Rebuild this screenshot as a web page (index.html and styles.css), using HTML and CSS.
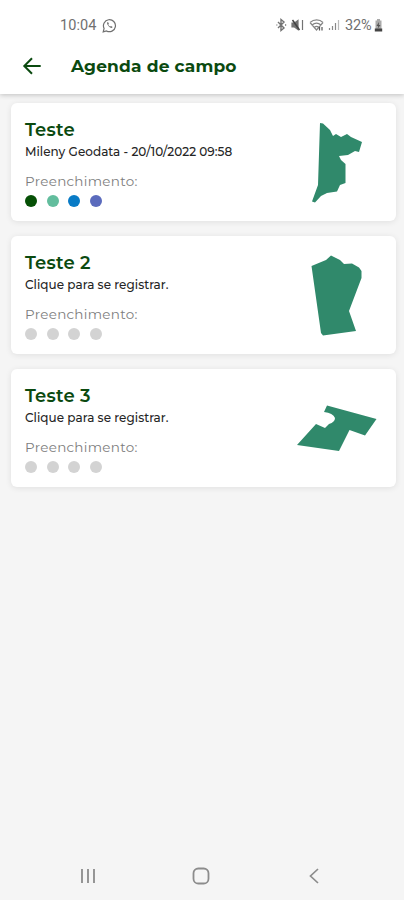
FILE: index.html
```html
<!DOCTYPE html>
<html lang="pt-BR">
<head>
<meta charset="utf-8">
<meta name="viewport" content="width=device-width, initial-scale=1">
<title>Agenda de campo</title>
<link rel="stylesheet" href="styles.css">
</head>
<body>
<div class="screen">
  <header class="top">
    <div class="status">
      <span class="clock">10:04</span>
      <svg class="whatsapp" width="15" height="15" viewBox="0 0 15 15" fill="none" stroke="#707070" stroke-width="1.2"><path d="M1.2 13.8l.9-3.4a6 6 0 1 1 2.400 2.500z"/><path d="M5.200 4.300c-.8 1.500 1.900 5.400 4.500 5.800l1-1.200-1.700-1-.9.700c-.8-.4-1.500-1.200-1.800-2l.6-.8-.7-1.500z" fill="#707070" stroke="none"/></svg>
      <svg class="signals" width="66" height="16" viewBox="0 0 66 16" fill="none" stroke="#737373" stroke-width="1.200">
        <path d="M3 5l6 6-3 2.500v-11L9 5l-6 6M1.500 8h.8M10 8h1.200" stroke-width="1.400"/>
        <path d="M17 6h2.500L23 3.500v9L19.500 10H17z" fill="#737373"/><path d="M17.500 3l7 10" stroke="#444" stroke-width="1.500"/><path d="M27.500 3v10"/>
        <path d="M35 5.500c4-3.500 9.500-3.500 13 0M37 8c3-2.500 6-2.500 9 0M39.500 10.200c1.500-1.200 2.800-1.200 4 0M35 5.500l6.500 7.500L48 5.500" stroke="#858585"/><path d="M44.500 10v3.500M47 13.500V10" stroke="#555"/>
        <path d="M54.500 13v-2M57.500 13V9M60.500 13V6" stroke="#888"/><path d="M63.500 13V3" stroke="#bbb"/>
      </svg>
      <span class="percent">32%</span>
      <svg class="battery" width="9" height="13" viewBox="0 0 9 13"><path d="M3 0h3v1.500h1.500V12h-6V1.500H3z" fill="#aaa"/><path d="M5 3L2.500 7h1.700L3.800 9.500 6.500 6H4.800z" fill="#555"/><path d="M.8 9.500h7.400v3H.8z" fill="#444"/></svg>
    </div>
    <div class="bar">
      <svg class="back" width="20" height="18" viewBox="0 0 20 18" fill="none" stroke="#0b4a10" stroke-width="2"><path d="M18.700 9H2.500M10 1.300L2.300 9l7.700 7.700"/></svg>
      <h1>Agenda de campo</h1>
    </div>
  </header>
  <main class="list">
    <article class="card">
      <div class="info">
        <h2>Teste</h2>
        <p class="detail">Mileny Geodata - 20/10/2022 09:58</p>
        <p class="label">Preenchimento:</p>
        <div class="dots"><i class="forest"></i><i class="mint"></i><i class="blue"></i><i class="indigo"></i></div>
      </div>
      <svg class="plot" width="106" height="118" viewBox="0 0 106 118"><path d="M30 20L33 20.500 40 27 43 33 46 31 51 34 57 31 61 34 72 39 69 49 65 48 58 52 49 53 51 57 55.500 61V80L50 82 47 88.500 37 90 31 93 25 99.500 22 98.500 28 82z"/></svg>
    </article>
    <article class="card">
      <div class="info">
        <h2>Teste 2</h2>
        <p class="detail">Clique para se registrar.</p>
        <p class="label">Preenchimento:</p>
        <div class="dots"><i></i><i></i><i></i><i></i></div>
      </div>
      <svg class="plot" width="106" height="118" viewBox="0 -1 106 118"><path d="M21.500 29L36 23 41 18.500 50 23 54 27 62 26.500 69 30.500 71.500 34V41L59 74 66 94 33 98.500 31 96z"/></svg>
    </article>
    <article class="card">
      <div class="info">
        <h2>Teste 3</h2>
        <p class="detail">Clique para se registrar.</p>
        <p class="label">Preenchimento:</p>
        <div class="dots"><i></i><i></i><i></i><i></i></div>
      </div>
      <svg class="plot" width="106" height="118" viewBox="0 -1 106 118"><path d="M37 35.500L86.500 49 75 65.500 59.500 60 49 81 7 75 26 54 35 58 39 54Q45 52 45 48 43 43 34 42z"/></svg>
    </article>
  </main>
  <nav class="system">
    <svg width="16" height="16" viewBox="0 0 16 16" stroke="#8c8c8c" stroke-width="1.800"><path d="M2 1v14M8 1v14M14 1v14"/></svg>
    <svg width="18" height="18" viewBox="0 0 18 18" fill="none" stroke="#8c8c8c" stroke-width="1.800"><rect x="1.500" y="1.500" width="15" height="15" rx="4.800"/></svg>
    <svg width="10" height="16" viewBox="0 0 10 16" fill="none" stroke="#8c8c8c" stroke-width="1.700"><path d="M9 1L1.500 8 9 15"/></svg>
  </nav>
</div>
</body>
</html>
```
FILE: styles.css
```css
* { box-sizing: border-box; }
body { margin: 0; background: #f5f5f5; font-family: Montserrat, Inter, sans-serif; }
h1, h2, p { margin: 0; white-space: nowrap; }
svg { display: block; flex: none; }
.screen { width: 404px; height: 900px; display: flex; flex-direction: column; }
.top { height: 94px; background: #fff; box-shadow: 0 1px 5px rgba(0, 0, 0, .22); }
.status { height: 46px; padding: 4px 20px 0 60px; display: flex; align-items: center; font-family: Roboto, sans-serif; font-size: 14.500px; color: #707070; }
.clock { width: 37px; letter-spacing: .1px; }
.whatsapp { margin-left: 5px; }
.signals { margin-left: 158px; }
.percent { margin-left: 4px; width: 28px; letter-spacing: -.2px; }
.battery { margin-left: 1px; }
.bar { height: 40px; padding-left: 22px; display: flex; align-items: center; }
h1 { margin-left: 29px; font-size: 17px; line-height: 22px; font-weight: 700; letter-spacing: .18px; color: #0b4a10; }
.list { flex: 1; padding: 9px 8px 0 11px; display: flex; flex-direction: column; gap: 15px; }
.card { height: 118px; padding-left: 14px; display: flex; justify-content: space-between; background: #fff; border-radius: 6px; box-shadow: 0 1px 6px rgba(0, 0, 0, .09); }
.info { padding-top: 16px; }
h2 { font-size: 18px; line-height: 22px; font-weight: 600; letter-spacing: .2px; color: #0b4a10; }
.detail { font-size: 12px; line-height: 16px; margin-top: 3px; font-weight: 500; letter-spacing: .03px; color: #252525; }
.label { font-size: 13.500px; line-height: 16px; margin-top: 13px; letter-spacing: .3px; color: #7d7d7d; font-weight: 400; }
.dots { display: flex; gap: 9.500px; margin-top: 6px; }
.dots i { width: 12px; height: 12px; border-radius: 50%; background: #d3d3d3; }
.dots .forest { background: #065006; }
.dots .mint { background: #62bd9d; }
.dots .blue { background: #087bc6; }
.dots .indigo { background: #5b6bbd; }
.plot { fill: #30896b; }
.system { height: 48px; padding: 0 85px 0 80px; display: grid; grid-template-columns: 112px 1fr auto; align-items: center; }
```
